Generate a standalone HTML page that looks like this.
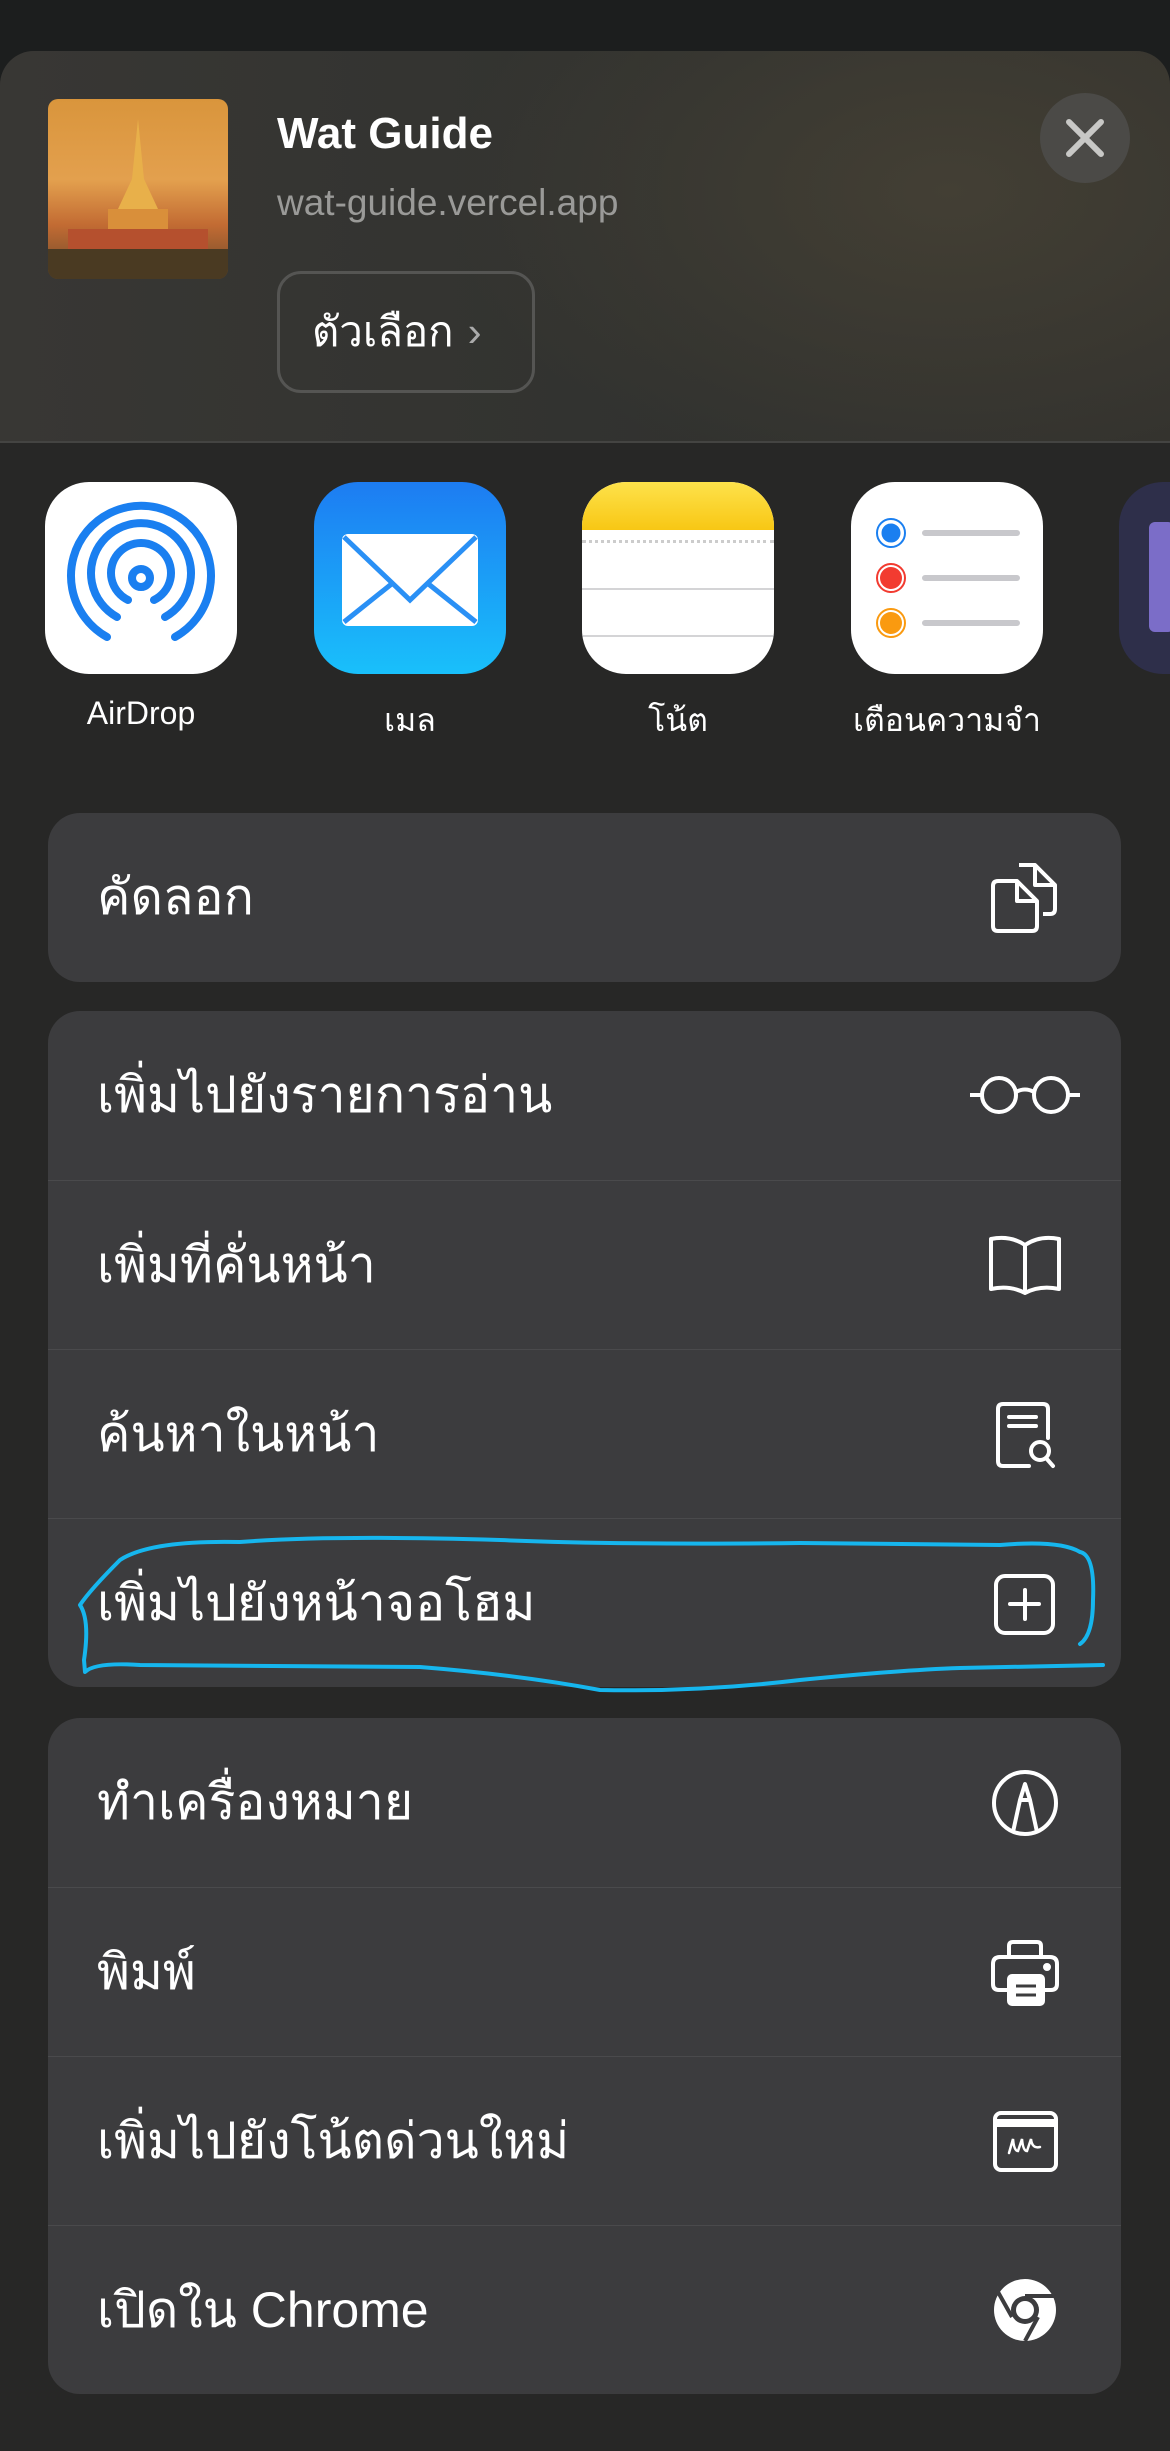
<!DOCTYPE html>
<html><head><meta charset="utf-8"><style>
*{margin:0;padding:0;box-sizing:border-box}
body{width:1170px;height:2350px;overflow:hidden;background:#1c1e1e;font-family:"Liberation Sans","Noto Sans CJK SC",sans-serif;color:#fff;position:relative}
.sheet{position:absolute;left:0;top:51px;width:1170px;height:2400px;border-radius:34px 34px 0 0;background:#272726;overflow:hidden}
.head{position:absolute;left:0;top:0;width:1170px;height:392px;background:radial-gradient(ellipse 500px 300px at 950px 140px,#433f34 0%,rgba(60,58,50,0) 100%),linear-gradient(90deg,#383734,#31322f 60%,#33322e);border-bottom:2px solid #444442}
.thumb{position:absolute;left:48px;top:48px;width:180px;height:180px;border-radius:10px;background:linear-gradient(180deg,#d9953c 0%,#e3a04e 45%,#c26b33 70%,#6b4a2a 100%);overflow:hidden}
.title{position:absolute;left:277px;top:58px;font-size:44px;font-weight:bold}
.url{position:absolute;left:277px;top:131px;font-size:37px;color:#9a9a98}
.opt{position:absolute;left:277px;top:220px;width:258px;height:122px;border:3px solid #555553;border-radius:24px;font-size:42px;display:flex;align-items:center;padding-left:32px}
.close{position:absolute;left:1040px;top:42px;width:90px;height:90px;border-radius:50%;background:#4b4a47}
.app{position:absolute;top:431px;width:192px;height:192px;border-radius:44px}
.lbl{position:absolute;top:644px;width:260px;text-align:center;font-size:32px;color:#fff}
.grp{position:absolute;left:48px;width:1073px;background:#3c3c3e;border-radius:32px;overflow:hidden}
.row{height:169px;position:relative;border-top:1.5px solid #4a4a4c;font-size:50px;display:flex;align-items:center;padding-left:49px}
.row:first-child{border-top:none}
.row svg{position:absolute;left:937px;top:44px}
</style></head><body>
<div class="sheet">
<div class="head">
<div class="thumb"><svg width="180" height="180"><polygon points="90,20 84,80 70,110 110,110 96,80" fill="#e8b04a"/><rect x="60" y="110" width="60" height="20" fill="#d98f3a"/><rect x="20" y="130" width="140" height="30" fill="#b5502e"/><rect x="0" y="150" width="180" height="30" fill="#4a3a22"/></svg></div>
<div class="title">Wat Guide</div>
<div class="url">wat-guide.vercel.app</div>
<div class="opt">ตัวเลือก <span style="color:#aaa;margin-left:14px">›</span></div>
<div class="close"><svg width="90" height="90"><path d="M29 29L61 61M61 29L29 61" stroke="#c8c8c6" stroke-width="6" stroke-linecap="round"/></svg></div>
</div>
<div class="app" style="left:45px;background:#fff"><svg width="192" height="192" fill="none" stroke="#1a7ff0" stroke-width="8" stroke-linecap="round"><path d="M62 155A70 70 0 1 1 130 155"/><path d="M72 135A50 50 0 1 1 120 135"/><path d="M83 118A30 30 0 1 1 109 118"/><circle cx="96" cy="96" r="9"/></svg></div>
<div class="app" style="left:314px;background:linear-gradient(#1d7cf2,#19c0fb)"><svg width="192" height="192"><rect x="28" y="52" width="136" height="92" rx="6" fill="#fff"/><path d="M30 55L96 118L162 55M30 140L80 100M162 140L112 100" stroke="#2a90f5" stroke-width="5" fill="none"/></svg></div>
<div class="app" style="left:582px;background:#fff;overflow:hidden"><div style="height:48px;background:linear-gradient(#fde24b,#f8c714)"></div><div style="margin-top:10px;border-top:3px dotted #ccc"></div><div style="margin-top:45px;border-top:2px solid #d4d4d6"></div><div style="margin-top:45px;border-top:2px solid #d4d4d6"></div></div>
<div class="app" style="left:851px;background:#fff"><svg width="192" height="192"><circle cx="40" cy="51" r="11" fill="#1a7ff0" stroke="#fff" stroke-width="3"/><circle cx="40" cy="51" r="14" fill="none" stroke="#1a7ff0" stroke-width="2"/><circle cx="40" cy="96" r="11" fill="#f23b30"/><circle cx="40" cy="96" r="14" fill="none" stroke="#f23b30" stroke-width="2"/><circle cx="40" cy="141" r="11" fill="#fa9a10"/><circle cx="40" cy="141" r="14" fill="none" stroke="#fa9a10" stroke-width="2"/><path d="M74 51H166M74 96H166M74 141H166" stroke="#c8c8cc" stroke-width="6" stroke-linecap="round"/></svg></div>
<div class="app" style="left:1119px;background:#2e2f4a"><div style="position:absolute;left:30px;top:40px;width:25px;height:110px;background:#7b6dc8;border-radius:6px"></div></div>
<div class="lbl" style="left:11px">AirDrop</div>
<div class="lbl" style="left:280px">เมล</div>
<div class="lbl" style="left:548px">โน้ต</div>
<div class="lbl" style="left:817px">เตือนความจำ</div>

<div class="grp" style="top:762px"><div class="row">คัดลอก<svg width="80" height="80" fill="none" stroke="#fff" stroke-width="4" stroke-linejoin="round"><path d="M34 8H50L70 28V52Q70 57 65 57H58"/><path d="M50 8V28H70"/><path d="M8 29Q8 24 13 24H32L52 44V69Q52 74 47 74H13Q8 74 8 69Z"/><path d="M32 24V44H52"/></svg></div></div>

<div class="grp" style="top:960px">
<div class="row">เพิ่มไปยังรายการอ่าน<svg width="120" height="80" style="left:917px" fill="none" stroke="#fff" stroke-width="4"><circle cx="34" cy="40" r="17"/><circle cx="86" cy="40" r="17"/><path d="M51 37Q60 32 69 37M5 40H17M103 40H115"/></svg></div>
<div class="row">เพิ่มที่คั่นหน้า<svg width="80" height="80" fill="none" stroke="#fff" stroke-width="4" stroke-linejoin="round"><path d="M40 68V20Q25 10 6 14V64Q25 60 40 68Q55 60 74 64V14Q55 10 40 20"/></svg></div>
<div class="row">ค้นหาในหน้า<svg width="80" height="80" fill="none" stroke="#fff" stroke-width="4" stroke-linecap="round"><path d="M44 72H18Q13 72 13 67V15Q13 10 18 10H58Q63 10 63 15V44"/><path d="M24 23H51M24 32H51"/><circle cx="55" cy="57" r="9"/><path d="M61 64L68 72"/></svg></div>
<div class="row">เพิ่มไปยังหน้าจอโฮม<svg width="80" height="80" fill="none" stroke="#fff" stroke-width="4" stroke-linecap="round"><rect x="11" y="13" width="57" height="57" rx="9"/><path d="M40 27V56M25 41H54"/></svg></div>
</div>

<div class="grp" style="top:1667px">
<div class="row">ทำเครื่องหมาย<svg width="80" height="80" fill="none" stroke="#fff" stroke-width="4" stroke-linejoin="round"><circle cx="40" cy="41" r="31"/><path d="M28 70L35 38L40 22L45 38L52 70M35 38H45"/></svg></div>
<div class="row">พิมพ์<svg width="80" height="80" fill="none" stroke="#fff" stroke-width="4"><path d="M24 25V14Q24 10 28 10H52Q56 10 56 14V25"/><path d="M22 58H14Q8 58 8 52V32Q8 25 15 25H65Q72 25 72 32V52Q72 58 66 58H58"/><rect x="24" y="44" width="34" height="28" rx="3" fill="#fff"/><path d="M31 54H51M31 63H51" stroke="#3c3c3e" stroke-width="3"/><circle cx="62" cy="35" r="2" fill="#fff"/></svg></div>
<div class="row">เพิ่มไปยังโน้ตด่วนใหม่<svg width="80" height="80" fill="none" stroke="#fff" stroke-width="4"><rect x="10" y="12" width="61" height="57" rx="6"/><path d="M10 22H71" stroke-width="8"/><path d="M24 52L28 38Q29 50 33 50L37 38Q38 50 42 50L46 38Q47 48 55 46" stroke-width="2.5" stroke-linecap="round"/></svg></div>
<div class="row">เปิดใน Chrome<svg width="80" height="80"><circle cx="40" cy="40" r="31" fill="#fff"/><circle cx="40" cy="40" r="14" fill="#3c3c3e"/><circle cx="40" cy="40" r="9" fill="#fff"/><path d="M40 26H69M27 47L13 22M53 47L40 71" stroke="#3c3c3e" stroke-width="4"/></svg></div>
</div>
</div>
<svg width="1170" height="2350" style="position:absolute;left:0;top:0" fill="none"><path d="M1080 1644Q1093 1635 1093 1600Q1095 1555 1080 1552Q1060 1540 1000 1545L800 1543Q620 1545 500 1540Q330 1535 240 1542Q150 1540 120 1560Q90 1590 80 1605Q90 1620 84 1660L85 1672Q95 1662 140 1665L420 1667Q520 1675 600 1690Q700 1692 800 1680Q900 1670 960 1668L1103 1665" stroke="#16b6ee" stroke-width="4" stroke-linecap="round" stroke-linejoin="round"/></svg>
</body></html>
